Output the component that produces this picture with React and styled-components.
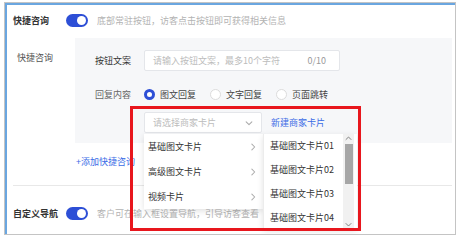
import React from "react";
import styled, { createGlobalStyle } from "styled-components";

const Global = createGlobalStyle`
  html, body { margin: 0; padding: 0; background: #fff; }
  body { font-family: "Noto Sans CJK SC", "Noto Sans", sans-serif; }
  * { box-sizing: border-box; }
`;

const Frame = styled.div`
  position: relative;
  margin: 2px 0 0 4px;
  width: 452px;
  height: 233px;
  border: 1px solid #c4c4c4;
  box-shadow: inset 2px 2px 0 #6aa6e0;
  padding: 7px 3px 0 8px;
  font-size: 9px;
  color: #333;
  overflow: hidden;
`;

const Row = styled.div`
  display: flex;
  align-items: center;
  height: 20px;
  margin-top: ${(p) => p.$mt || 0}px;
`;

const MainLabel = styled.div`
  width: 53px;
  font-weight: 600;
  color: #333;
  white-space: nowrap;
`;

const Toggle = styled.div`
  width: 22px;
  height: 13px;
  border-radius: 7px;
  background: #2d4fd6;
  position: relative;
  flex: none;
  &::after {
    content: "";
    position: absolute;
    right: 2px;
    top: 2px;
    width: 9px;
    height: 9px;
    border-radius: 50%;
    background: #fff;
  }
`;

const Desc = styled.div`
  margin-left: 9px;
  color: #b3b3b3;
  white-space: nowrap;
  overflow: hidden;
  max-width: ${(p) => (p.$maxw ? `${p.$maxw}px` : "none")};
`;

const Section = styled.div`
  display: flex;
  margin-top: 8px;
`;

const SubLabel = styled.div`
  width: 62px;
  padding: 10px 0 0 4px;
  line-height: 20px;
  color: #555;
  flex: none;
`;

const Panel = styled.div`
  flex: 1;
  background: #f6f7f9;
  padding: 12px 0 10px 20px;
  display: flex;
  flex-direction: column;
`;

const FieldRow = styled.div`
  display: flex;
  align-items: center;
  height: 21px;
  margin-top: ${(p) => p.$mt || 0}px;
  padding-left: ${(p) => p.$indent || 0}px;
`;

const FieldLabel = styled.div`
  width: 49px;
  color: ${(p) => (p.$muted ? "#666" : "#333")};
  flex: none;
`;

const Input = styled.div`
  width: 196px;
  height: 21px;
  background: #fff;
  border: 1px solid #e4e6ea;
  border-radius: 2px;
  display: flex;
  align-items: center;
  justify-content: space-between;
  padding: 0 13px 0 8px;
  color: #bcbcbc;
`;

const Count = styled.span`
  color: #999;
`;

const RadioItem = styled.div`
  display: flex;
  align-items: center;
  margin-right: 14px;
  color: #444;
`;

const RadioDot = styled.span`
  width: 11px;
  height: 11px;
  border-radius: 50%;
  background: #fff;
  border: ${(p) => (p.$on ? "3px solid #2d4fd6" : "1px solid #dcdcdc")};
  margin-right: 5px;
  flex: none;
`;

const SelectWrap = styled.div`
  position: relative;
`;

const Select = styled.div`
  width: 118px;
  height: 21px;
  background: #fff;
  border: 1px solid #e4e6ea;
  border-radius: 2px;
  display: flex;
  align-items: center;
  justify-content: space-between;
  padding: 0 8px 0 8px;
  color: #bcbcbc;
`;

const Link = styled.div`
  color: #3b6ce6;
  margin-left: ${(p) => p.$ml || 0}px;
  white-space: nowrap;
`;

const Dropdown = styled.div`
  position: absolute;
  left: 0;
  top: calc(100% + 1px);
  display: flex;
  align-items: flex-start;
  z-index: 5;
`;

const Column = styled.div`
  width: ${(p) => p.$w}px;
  height: ${(p) => p.$h}px;
  background: #fff;
  box-shadow: 0 2px 6px rgba(0, 0, 0, 0.12);
  display: flex;
  border-left: ${(p) => (p.$sep ? "1px solid #ececec" : "none")};
`;

const List = styled.div`
  flex: 1;
  display: flex;
  flex-direction: column;
`;

const Item = styled.div`
  height: 25px;
  display: flex;
  align-items: center;
  justify-content: space-between;
  padding: 0 6px 0 ${(p) => p.$pl || 4}px;
  color: #333;
  white-space: nowrap;
`;

const Track = styled.div`
  width: 11px;
  margin-right: 3px;
  background: #f1f1f1;
  display: flex;
  flex-direction: column;
  align-items: center;
  justify-content: space-between;
  padding: 1px 0;
`;

const Thumb = styled.div`
  width: 8px;
  height: 40px;
  background: #a6a6a6;
  margin-top: 2px;
`;

const Spacer = styled.div`
  flex: 1;
`;

const AddLink = styled.div`
  height: 20px;
  line-height: 20px;
  margin: 9px 0 0 63px;
  color: #3b6ce6;
`;

const Divider = styled.div`
  height: 1px;
  background: #e8e8e8;
  margin-top: 13px;
`;

const RedBox = styled.div`
  position: absolute;
  left: 125px;
  top: 103px;
  width: 231px;
  height: 125px;
  border: 3px solid #e8161d;
  z-index: 10;
  pointer-events: none;
`;

const Chevron = ({ dir = "down", size = 7, color = "#999" }) => {
  const d = {
    down: "M1 2.5 L3.5 5 L6 2.5",
    up: "M1 4.5 L3.5 2 L6 4.5",
    right: "M2.5 1 L5 3.5 L2.5 6",
  }[dir];
  return (
    <svg width={size} height={size} viewBox="0 0 7 7" fill="none">
      <path d={d} stroke={color} strokeWidth="0.9" strokeLinecap="round" strokeLinejoin="round" />
    </svg>
  );
};

export default function App() {
  return (
    <>
      <Global />
      <Frame>
        <Row>
          <MainLabel>快捷咨询</MainLabel>
          <Toggle />
          <Desc>底部常驻按钮，访客点击按钮即可获得相关信息</Desc>
        </Row>
        <Section>
          <SubLabel>快捷咨询</SubLabel>
          <Panel>
            <FieldRow>
              <FieldLabel>按钮文案</FieldLabel>
              <Input>
                <span>请输入按钮文案，最多10个字符</span>
                <Count>0/10</Count>
              </Input>
            </FieldRow>
            <FieldRow $mt={13}>
              <FieldLabel $muted>回复内容</FieldLabel>
              <RadioItem><RadioDot $on />图文回复</RadioItem>
              <RadioItem><RadioDot />文字回复</RadioItem>
              <RadioItem><RadioDot />页面跳转</RadioItem>
            </FieldRow>
            <FieldRow $mt={7} $indent={49}>
              <SelectWrap>
                <Select>
                  <span>请选择商家卡片</span>
                  <Chevron dir="down" size={8} color="#aaa" />
                </Select>
                <Dropdown>
                  <Column $w={119} $h={75}>
                    <List>
                      {["基础图文卡片", "高级图文卡片", "视频卡片"].map((t) => (
                        <Item key={t}>
                          <span>{t}</span>
                          <Chevron dir="right" size={8} color="#aaa" />
                        </Item>
                      ))}
                    </List>
                  </Column>
                  <Column $w={94} $h={95} $sep>
                    <List>
                      {["01", "02", "03", "04"].map((n) => (
                        <Item key={n} $pl={6}>基础图文卡片{n}</Item>
                      ))}
                    </List>
                    <Track>
                      <Chevron dir="up" size={7} color="#777" />
                      <Thumb />
                      <Spacer />
                      <Chevron dir="down" size={7} color="#777" />
                    </Track>
                  </Column>
                </Dropdown>
              </SelectWrap>
              <Link $ml={9}>新建商家卡片</Link>
            </FieldRow>
          </Panel>
        </Section>
        <AddLink>+添加快捷咨询</AddLink>
        <Divider />
        <Row $mt={17}>
          <MainLabel>自定义导航</MainLabel>
          <Toggle />
          <Desc $maxw={165}>客户可在输入框设置导航，引导访客查看</Desc>
        </Row>
        <RedBox />
      </Frame>
    </>
  );
}
